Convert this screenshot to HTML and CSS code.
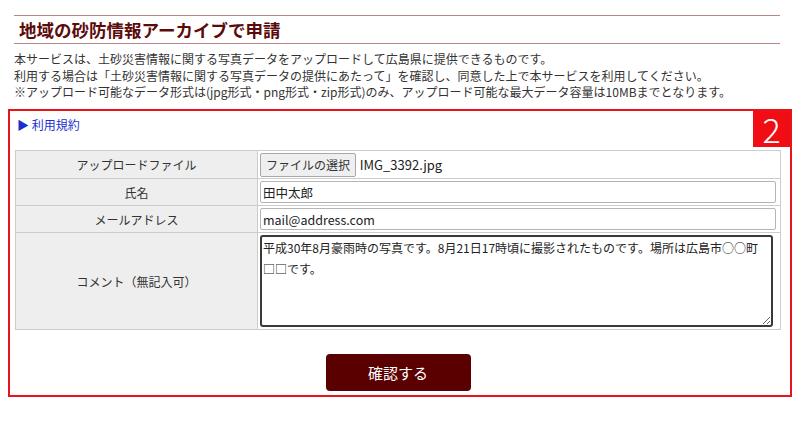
FILE: index.html
```html
<!DOCTYPE html>
<html>
  <head>
    <meta charset="utf-8">
    <title>地域の砂防情報アーカイブで申請</title>
    <link rel="stylesheet" href="styles.css">
  </head>
  <body>
    <div class="page">
      <h1 class="page-title">地域の砂防情報アーカイブで申請</h1>
      <div class="intro">
        <p>本サービスは、土砂災害情報に関する写真データをアップロードして広島県に提供できるものです。</p>
        <p>利用する場合は「土砂災害情報に関する写真データの提供にあたって」を確認し、同意した上で本サービスを利用してください。</p>
        <p>※アップロード可能なデータ形式は(jpg形式・png形式・zip形式)のみ、アップロード可能な最大データ容量は10MBまでとなります。</p>
      </div>

      <div class="apply-box">
        <span class="step-badge">2</span>
        <div class="terms-link">▶ 利用規約</div>

        <table class="form-table">
          <tr>
            <th>アップロードファイル</th>
            <td class="file-cell">
              <span class="file-button">ファイルの選択</span>
              <span class="file-name">IMG_3392.jpg</span>
            </td>
          </tr>
          <tr>
            <th>氏名</th>
            <td><input type="text" class="text-input" value="田中太郎"></td>
          </tr>
          <tr>
            <th>メールアドレス</th>
            <td><input type="text" class="text-input" value="mail@address.com"></td>
          </tr>
          <tr>
            <th>コメント（無記入可）</th>
            <td><textarea class="comment-input">平成30年8月豪雨時の写真です。8月21日17時頃に撮影されたものです。場所は広島市○○町
□□です。</textarea></td>
          </tr>
        </table>

        <div class="actions">
          <button class="confirm-button">確認する</button>
        </div>
      </div>
    </div>
  </body>
</html>
```

FILE: styles.css
```css
body {
  margin: 0;
  font-family: "Noto Sans CJK JP", sans-serif;
  font-size: 12px;
  color: #333;
}
.page { padding: 15px 8px 0 8px; }

.page-title {
  margin: 0 12px 0 6px;
  padding-left: 5px;
  height: 27px;
  line-height: 27px;
  border-top: 1px solid #b98585;
  border-bottom: 1px solid #b98585;
  font-size: 17.5px;
  font-weight: bold;
  color: #5c0b0b;
}

.intro { margin: 7px 0 8px 6px; }
.intro p { margin: 0; line-height: 16.5px; }

.apply-box {
  position: relative;
  border: 2px solid #e8141c;
  padding: 6px 9px 4px 5px;
}
.step-badge {
  position: absolute;
  top: 0; right: 0;
  width: 37px; height: 36px;
  background: #f00d14;
  color: #fff;
  font-size: 34px;
  font-weight: 300;
  line-height: 36px;
  text-align: center;
}
.terms-link { color: #1a2fd0; line-height: 16px; padding-left: 2px; margin-bottom: 17px; }

.form-table {
  width: 100%;
  border-collapse: collapse;
  border: 1px solid #ccc;
  font-size: 12px;
}
.form-table th {
  width: 241px;
  background: #eee;
  border: 1px solid #ccc;
  font-weight: normal;
  text-align: center;
  padding: 0;
}
.form-table td {
  border: 1px solid #ccc;
  padding: 2px 4px 2px 2px;
  vertical-align: middle;
}
.form-table td.file-cell { padding-top: 1px; padding-bottom: 1px; line-height: 24px; }

.file-button {
  display: inline-block;
  box-sizing: border-box;
  width: 96px; height: 24px;
  line-height: 22px;
  text-align: center;
  background: #efefef;
  border: 1px solid #a8a8a8;
  border-radius: 2px;
  vertical-align: middle;
}
.file-name { font-size: 13px; margin-left: 1px; vertical-align: middle; color: #222; }

.text-input {
  display: block;
  box-sizing: border-box;
  width: 100%; height: 22px;
  margin: 0;
  padding: 0 2px;
  border: 1px solid #b5b5b5;
  border-radius: 2px;
  font-family: inherit;
  font-size: 12.5px;
  color: #222;
}
.comment-input {
  display: block;
  box-sizing: border-box;
  width: calc(100% - 3px); height: 92px;
  margin: 0;
  padding: 0 1px;
  border: 2px solid #3a3a3a;
  border-radius: 3px;
  font-family: inherit;
  font-size: 12px;
  line-height: 21px;
  color: #222;
  resize: vertical;
}

.actions { text-align: center; margin-top: 24px; line-height: 0; }
.confirm-button {
  width: 145px; height: 37px;
  background: #5a0000;
  color: #fff;
  border: none;
  border-radius: 4px;
  font-family: inherit;
  font-size: 15px;
  line-height: 37px;
  padding: 0;
}
```
